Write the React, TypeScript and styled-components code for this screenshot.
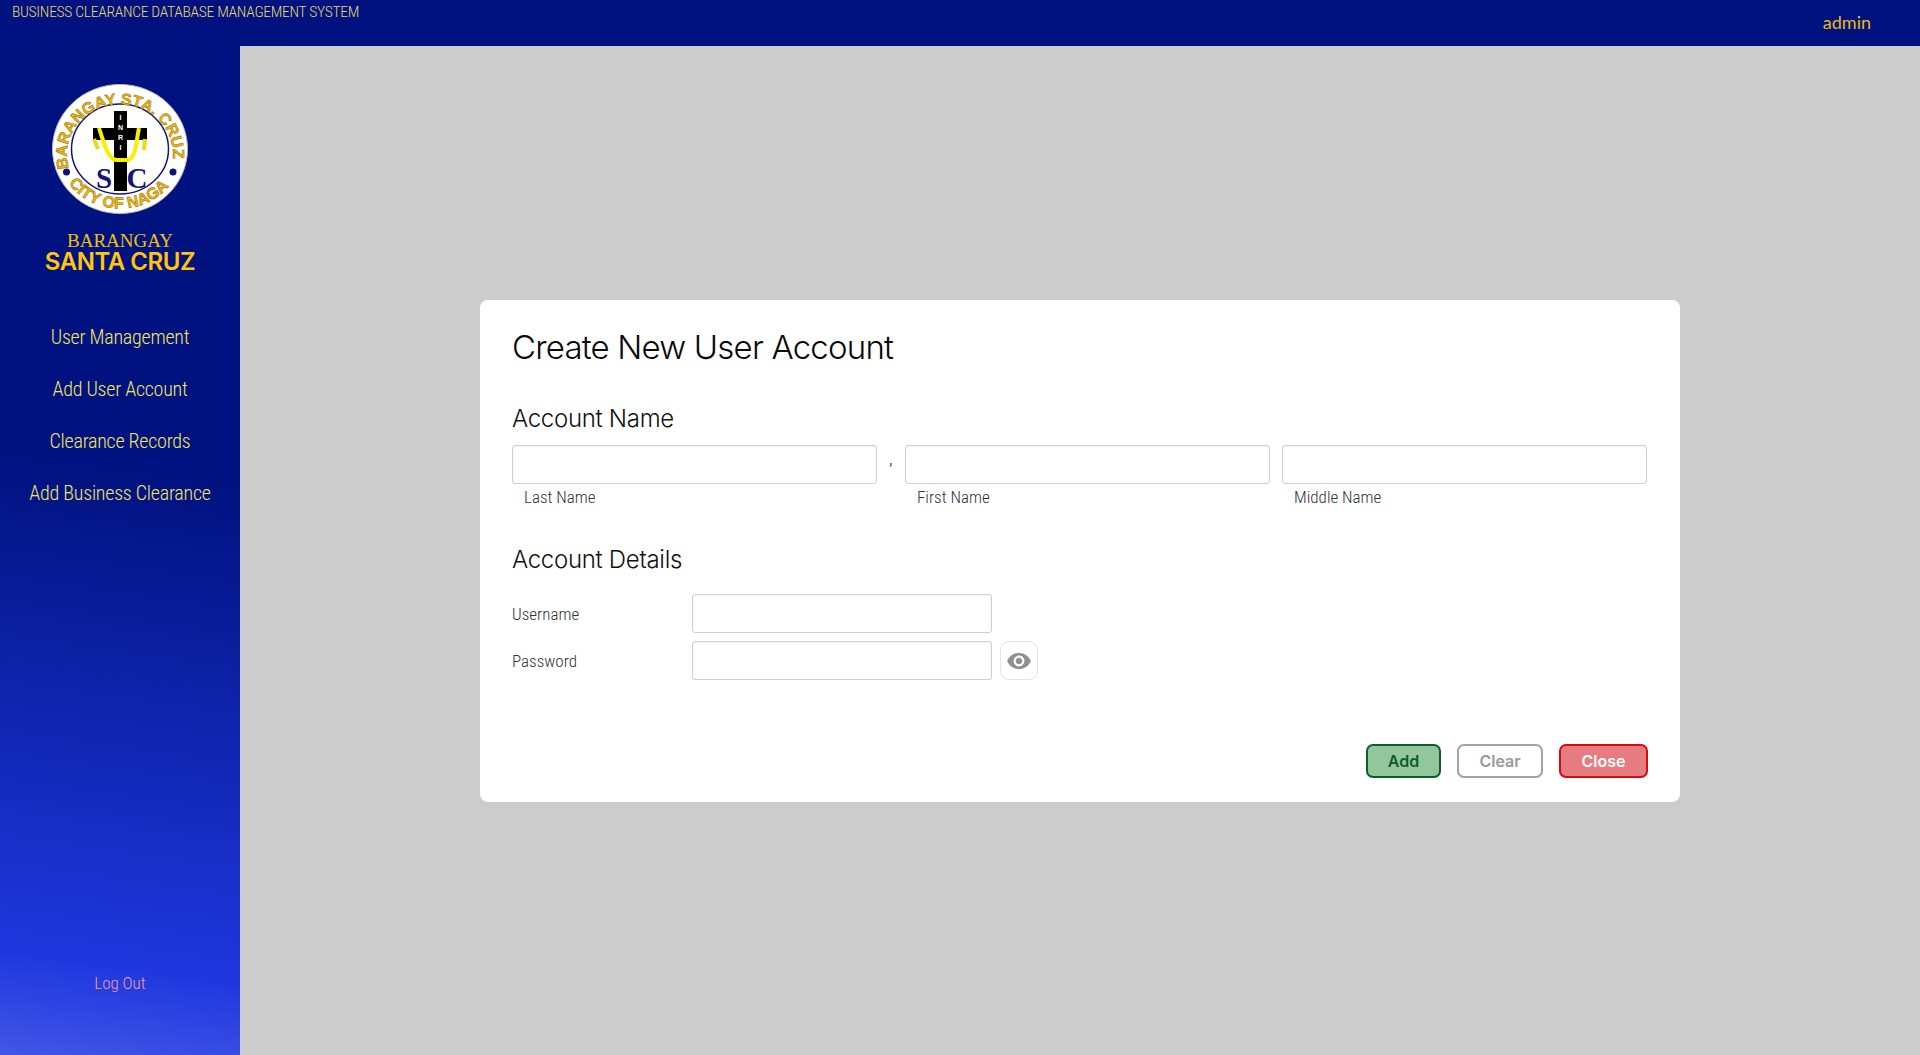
import styled, { createGlobalStyle } from 'styled-components'
import { MdVisibility } from 'react-icons/md'

const GlobalStyle = createGlobalStyle`
  html, body {
    margin: 0;
    padding: 0;
    height: 100%;
    overflow: hidden;
  }
  #root {
    height: 100%;
  }
`

const narrow = `"Liberation Sans Narrow", "Roboto Condensed", Roboto, sans-serif`

const Page = styled.div`
  display: grid;
  grid-template-columns: 240px 1fr;
  grid-template-rows: 46px 1fr;
  height: 1055px;
  background-color: #cccccc;
`

const TopBar = styled.header`
  grid-column: 1 / 3;
  display: flex;
  justify-content: space-between;
  background-color: #00127f;
  padding: 0 49px 0 12px;
`

const SystemName = styled.div`
  font-family: ${narrow};
  font-size: 15.5px;
  font-weight: 300;
  letter-spacing: -0.27px;
  line-height: 25px;
  color: #e8d868;
`

const UserName = styled.div`
  font-family: Lato, sans-serif;
  font-size: 18px;
  line-height: 44px;
  color: #efb810;
`

const Sidebar = styled.aside`
  display: flex;
  flex-direction: column;
  align-items: center;
  padding: 38px 0 61px;
  background: linear-gradient(188deg, #00127f 42%, #1f37de 90%, #4a5ce8 102%);
`

const Logo = styled.svg`
  display: block;
  width: 136px;
  height: 130px;
`

const BrandTop = styled.div`
  margin-top: 17px;
  font-family: "Liberation Serif", serif;
  font-size: 19px;
  line-height: 19px;
  color: #f0c00c;
`

const BrandName = styled.div`
  margin-top: -1px;
  font-family: Inter, sans-serif;
  font-size: 24px;
  font-weight: 600;
  letter-spacing: -0.45px;
  line-height: 26px;
  color: #ffc60a;
`

const Nav = styled.nav`
  display: flex;
  flex-direction: column;
  align-items: center;
  gap: 26px;
  margin-top: 49px;
`

const NavLink = styled.a`
  font-family: ${narrow};
  font-size: 20px;
  font-weight: 300;
  letter-spacing: -0.25px;
  line-height: 26px;
  color: #f2e75f;
`

const LogOut = styled.a`
  margin-top: auto;
  font-family: ${narrow};
  font-size: 17px;
  font-weight: 300;
  line-height: 22px;
  color: #f09aa8;
`

const Main = styled.main`
  display: flex;
  align-items: center;
  justify-content: center;
  padding-top: 1px;
`

const Card = styled.section`
  box-sizing: border-box;
  width: 1200px;
  height: 502px;
  padding: 25px 32px 24px;
  display: flex;
  flex-direction: column;
  background-color: #ffffff;
  border-radius: 8px;
`

const Title = styled.h1`
  margin: 0;
  font-family: Inter, sans-serif;
  font-size: 33px;
  font-weight: 300;
  letter-spacing: -0.8px;
  line-height: 44px;
  color: #0a0a0a;
`

const SectionTitle = styled.h2`
  margin: 0;
  font-family: Inter, sans-serif;
  font-size: 24px;
  font-weight: 300;
  letter-spacing: -0.3px;
  line-height: 32px;
  color: #111111;
`

const NameSection = styled.div`
  margin-top: 34px;
`

const NameGrid = styled.div`
  display: grid;
  grid-template-columns: 365px 28px 365px 12px 365px;
  margin-top: 10px;
`

const Separator = styled.span`
  text-align: center;
  font-family: ${narrow};
  font-size: 14px;
  line-height: 30px;
  color: #444444;
`

const Field = styled.input<{ $w: number }>`
  box-sizing: border-box;
  display: block;
  width: ${p => p.$w}px;
  height: 39px;
  padding: 0 10px;
  background: #ffffff;
  border: 1.5px solid #d0d0d0;
  border-radius: 3px;
  box-shadow: inset 0 1px 2px rgba(0, 0, 0, 0.06);
  outline: none;
`

const Hint = styled.label`
  display: block;
  padding: 1px 0 0 12px;
  font-family: ${narrow};
  font-size: 17px;
  font-weight: 300;
  line-height: 24px;
  color: #2e343c;
`

const DetailsSection = styled.div`
  margin-top: 35px;
`

const DetailsRows = styled.div`
  display: flex;
  flex-direction: column;
  gap: 8px;
  margin-top: 18px;
`

const DetailRow = styled.div`
  display: flex;
  align-items: center;
`

const RowLabel = styled.label`
  width: 180px;
  font-family: ${narrow};
  font-size: 17px;
  font-weight: 300;
  color: #2e343c;
`

const EyeButton = styled.button`
  box-sizing: border-box;
  display: flex;
  align-items: center;
  justify-content: center;
  width: 38px;
  height: 39px;
  margin-left: 8px;
  padding: 0;
  color: #909090;
  background: #ffffff;
  border: 1.5px solid #e2e2e2;
  border-radius: 9px;
`

const Actions = styled.div`
  display: flex;
  justify-content: flex-end;
  gap: 16px;
  margin-top: auto;
`

const tones = {
  add: 'background:#93c79b;border-color:#0d5c2e;color:#0d5c2e;',
  clear: 'background:#ffffff;border-color:#a3a3a3;color:#999999;',
  close: 'background:#e67c80;border-color:#d30b12;color:#ffffff;',
}

const ActionButton = styled.button<{ $tone: keyof typeof tones; $w: number }>`
  box-sizing: border-box;
  width: ${p => p.$w}px;
  height: 34px;
  padding: 0;
  font-family: Inter, sans-serif;
  font-size: 16px;
  font-weight: 600;
  border: 2px solid;
  border-radius: 7px;
  ${p => tones[p.$tone]}
`

const SealText = styled.text<{ $size: number }>`
  font-family: "Liberation Sans", sans-serif;
  font-size: ${p => p.$size}px;
  font-weight: 700;
  fill: #f2b90f;
  stroke: #8a6a00;
  stroke-width: 0.5px;
`

const Seal = () => (
  <Logo viewBox="0 0 136 130">
    <defs>
      <path id="sealTop" d="M 17 84 A 53 50 0 1 1 119 84" />
      <path id="sealBottom" d="M 15 97 A 63 60 0 0 0 121 97" />
    </defs>
    <ellipse cx="68" cy="65" rx="67.5" ry="64.5" fill="#ffffff" stroke="#b8b8c8" />
    <ellipse cx="68" cy="65" rx="48.5" ry="45" fill="#ffffff" stroke="#14147a" strokeWidth="1.5" />
    <SealText $size={16}>
      <textPath href="#sealTop">BARANGAY STA. CRUZ</textPath>
    </SealText>
    <SealText $size={16}>
      <textPath href="#sealBottom" startOffset="3">CITY OF NAGA</textPath>
    </SealText>
    <circle cx="14.5" cy="88" r="3.5" fill="#10107a" />
    <circle cx="121" cy="88" r="3.5" fill="#10107a" />
    <rect x="62" y="27" width="13" height="80" fill="#000000" />
    <rect x="41" y="44" width="54" height="12" fill="#000000" />
    <path d="M 47 44 C 52 60 56 74 64 76 L 76 76 C 84 74 84 58 87 44" fill="none" stroke="#f7f000" strokeWidth="4" />
    <path d="M 42 55 L 46 65 M 93 55 L 92 66" fill="none" stroke="#eedb10" strokeWidth="4" />
    <g fill="#ffffff" fontFamily="Liberation Sans, sans-serif" fontSize="7" fontWeight="700" textAnchor="middle">
      <text x="68.5" y="36">I</text>
      <text x="68.5" y="46">N</text>
      <text x="68.5" y="56">R</text>
      <text x="68.5" y="66">I</text>
    </g>
    <g fill="#14147a" fontFamily="Liberation Serif, serif" fontSize="29" fontWeight="700" textAnchor="middle">
      <text x="52" y="104">S</text>
      <text x="85" y="104">C</text>
    </g>
  </Logo>
)

const navItems = ['User Management', 'Add User Account', 'Clearance Records', 'Add Business Clearance']

export default function App() {
  return (
    <Page>
      <GlobalStyle />
      <TopBar>
        <SystemName>BUSINESS CLEARANCE DATABASE MANAGEMENT SYSTEM</SystemName>
        <UserName>admin</UserName>
      </TopBar>
      <Sidebar>
        <Seal />
        <BrandTop>BARANGAY</BrandTop>
        <BrandName>SANTA CRUZ</BrandName>
        <Nav>
          {navItems.map(item => (
            <NavLink key={item}>{item}</NavLink>
          ))}
        </Nav>
        <LogOut>Log Out</LogOut>
      </Sidebar>
      <Main>
        <Card>
          <Title>Create New User Account</Title>
          <NameSection>
            <SectionTitle>Account Name</SectionTitle>
            <NameGrid>
              <div>
                <Field $w={365} />
                <Hint>Last Name</Hint>
              </div>
              <Separator>,</Separator>
              <div>
                <Field $w={365} />
                <Hint>First Name</Hint>
              </div>
              <span />
              <div>
                <Field $w={365} />
                <Hint>Middle Name</Hint>
              </div>
            </NameGrid>
          </NameSection>
          <DetailsSection>
            <SectionTitle>Account Details</SectionTitle>
            <DetailsRows>
              <DetailRow>
                <RowLabel>Username</RowLabel>
                <Field $w={300} />
              </DetailRow>
              <DetailRow>
                <RowLabel>Password</RowLabel>
                <Field $w={300} type="password" />
                <EyeButton type="button">
                  <MdVisibility size={26} />
                </EyeButton>
              </DetailRow>
            </DetailsRows>
          </DetailsSection>
          <Actions>
            <ActionButton $tone="add" $w={75}>Add</ActionButton>
            <ActionButton $tone="clear" $w={86}>Clear</ActionButton>
            <ActionButton $tone="close" $w={89}>Close</ActionButton>
          </Actions>
        </Card>
      </Main>
    </Page>
  )
}
